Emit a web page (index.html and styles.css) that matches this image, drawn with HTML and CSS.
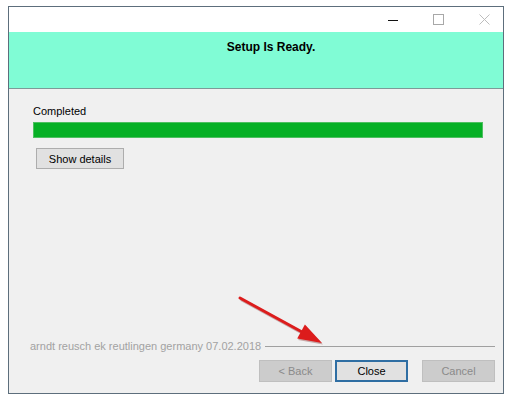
FILE: index.html
```html
<!DOCTYPE html>
<html lang="en">
<head>
  <meta charset="UTF-8">
  <meta name="viewport" content="width=device-width, initial-scale=1.0">
  <title>Setup</title>
  <link rel="stylesheet" href="styles.css">
</head>
<body>
  <div class="window">
    <div class="titlebar">
      <svg class="ctl" width="10" height="10" viewBox="0 0 10 10"><path d="M0 5.5h10" stroke="#111" stroke-width="1"/></svg>
      <svg class="ctl" width="11" height="11" viewBox="0 0 11 11"><rect x="0.5" y="0.5" width="10" height="10" fill="none" stroke="#a8a8a8"/></svg>
      <svg class="ctl" width="11" height="11" viewBox="0 0 11 11"><path d="M0.5 0.5l10 10M10.5 0.5l-10 10" stroke="#bdbdbd" stroke-width="1"/></svg>
    </div>
    <div class="header">
      <h1>Setup Is Ready.</h1>
    </div>
    <div class="content">
      <div class="label">Completed</div>
      <div class="progress"><div class="fill"></div></div>
      <button class="btn details">Show details</button>

      <div class="footer">
        <div class="brand">
          <span>arndt reusch ek reutlingen germany 07.02.2018</span>
          <div class="rule"></div>
        </div>
        <div class="buttons">
          <button class="btn disabled">&lt; Back</button>
          <button class="btn focused">Close</button>
          <button class="btn disabled cancel">Cancel</button>
        </div>
      </div>
    </div>
  </div>

  <!-- annotation arrow drawn over the screenshot -->
  <svg class="arrow" width="511" height="398" viewBox="0 0 511 398">
    <g transform="translate(1,1.5)" fill="#7a2020" stroke="#7a2020" opacity="0.35">
      <path d="M240 298L303 332.5" stroke-width="3" fill="none"/>
      <path d="M322 343L297.2 338.5L304.9 324.5Z" stroke="none"/>
    </g>
    <path d="M240 298L303 332.5" stroke="#dc1c1c" stroke-width="3" stroke-linecap="round" fill="none"/>
    <path d="M322 343L297.2 338.5L304.9 324.5Z" fill="#dc1c1c"/>
  </svg>
</body>
</html>
```

FILE: styles.css
```css
/* Installer window */
body {
  margin: 0;
  background: #fff;
  font-family: "Liberation Sans", Arial, sans-serif;
  font-size: 11px;
  color: #000;
  position: relative;
  width: 511px;
  height: 398px;
  overflow: hidden;
}
.window {
  margin: 6px 0 0 8px;
  width: 494px;
  height: 386px;
  border: 1px solid #5d6e7c;
  background: #f0f0f0;
  display: flex;
  flex-direction: column;
}
.titlebar {
  height: 25px;
  background: #fff;
  display: flex;
  align-items: center;
  justify-content: flex-end;
  gap: 35px;
  padding-right: 13px;
}
.header {
  height: 56px;
  background: #80fcd5;
  border-bottom: 1px solid #7d9a98;
  padding-left: 30px;
}
.header h1 {
  margin: 0;
  padding-top: 8px;
  font-size: 12px;
  line-height: 14px;
  text-align: center;
  font-weight: bold;
}
.content {
  flex: 1;
  display: flex;
  flex-direction: column;
  padding: 16px 20px 0 24px;
}
.label {
  line-height: 13px;
}
.progress {
  margin-top: 4px;
  height: 16px;
  box-sizing: border-box;
  border: 1px solid #4dc060;
  background: #e6e6e6;
}
.fill {
  width: 100%;
  height: 100%;
  background: #06b025;
}
.btn {
  font-family: "Liberation Sans", Arial, sans-serif;
  font-size: 11px;
  height: 21px;
  padding: 0;
  background: #e1e1e1;
  border: 1px solid #adadad;
  color: #000;
}
.details {
  margin: 10px 0 0 3px;
  width: 88px;
  height: 21px;
}
.footer {
  margin-top: auto;
  margin-left: -3px;
  margin-right: -12px;
  padding-bottom: 11px;
}
.brand {
  display: flex;
  align-items: center;
  gap: 4px;
  color: #a2a2a2;
  font-size: 11px;
  line-height: 13px;
  padding-top: 1px;
}
.rule {
  flex: 1;
  height: 1px;
  background: #a0a0a0;
}
.buttons {
  margin-top: 7px;
  display: flex;
  justify-content: flex-end;
  gap: 3px;
}
.buttons .btn {
  width: 73px;
  height: 22px;
}
.disabled {
  background: #cccccc;
  border-color: #bfbfbf;
  color: #8a8a8a;
}
.focused {
  border: 2px solid #2f6ea3;
}
.cancel {
  margin-left: 11px;
}
.arrow {
  position: absolute;
  left: 0;
  top: 0;
  pointer-events: none;
}
```
